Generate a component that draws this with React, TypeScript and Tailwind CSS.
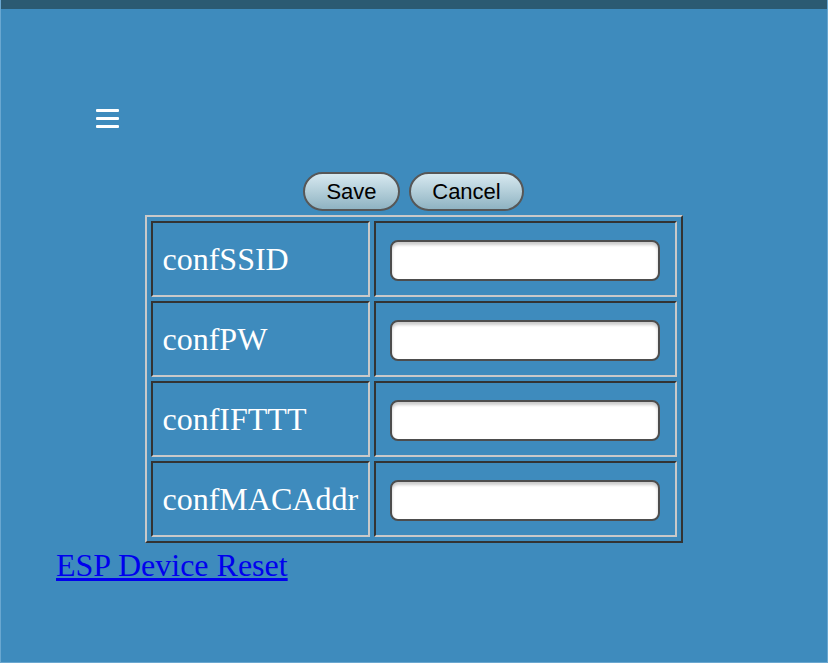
const fields = ["confSSID", "confPW", "confIFTTT", "confMACAddr"];

export default function App() {
  return (
    <div className="w-[828px] h-[663px] bg-[#3e8bbd] border-x border-b border-[#6aa7d0] overflow-hidden font-['Liberation_Serif',serif]">
      {/* top strip */}
      <div className="h-[9px] bg-[#2b5a72]" />

      {/* menu */}
      <div className="pl-[95px] pt-[100px]">
        <div className="flex flex-col gap-[5px] w-[23px]">
          <span className="block h-[3px] bg-white rounded-[1px]" />
          <span className="block h-[3px] bg-white rounded-[1px]" />
          <span className="block h-[3px] bg-white rounded-[1px]" />
        </div>
      </div>

      {/* buttons */}
      <div className="flex justify-center gap-[9px] mt-[44px] pr-[1px]">
        <button className="w-[97px] h-[39px] rounded-full border-2 border-[#575757] bg-gradient-to-b from-[#d7e9f0] to-[#8fb3c2] text-black text-[22px] leading-none font-['Liberation_Sans',sans-serif]">
          Save
        </button>
        <button className="w-[115px] h-[39px] rounded-full border-2 border-[#575757] bg-gradient-to-b from-[#d7e9f0] to-[#8fb3c2] text-black text-[22px] leading-none font-['Liberation_Sans',sans-serif]">
          Cancel
        </button>
      </div>

      {/* config table */}
      <div className="flex justify-center mt-[4px] pr-[1px]">
        <div className="grid grid-cols-[219px_303px] gap-[4px] p-[4px] border-2 border-t-[#c9c9c9] border-l-[#c9c9c9] border-b-[#333] border-r-[#333]">
          {fields.map((f) => (
            <div key={f} className="contents">
              <div className="h-[76px] flex items-center pl-[10px] border-2 border-t-[#333] border-l-[#333] border-b-[#c9c9c9] border-r-[#c9c9c9] text-white text-[32px]">
                {f}
              </div>
              <div className="h-[76px] flex items-center pl-[14px] pt-[2px] border-2 border-t-[#333] border-l-[#333] border-b-[#c9c9c9] border-r-[#c9c9c9]">
                <input
                  type="text"
                  className="w-[270px] h-[41px] bg-white rounded-[8px] border-2 border-[#4d4d4d] shadow-[inset_0_3px_3px_rgba(0,0,0,0.2)] outline-none"
                />
              </div>
            </div>
          ))}
        </div>
      </div>

      <div className="pl-[55px] mt-[4px] leading-[37px]">
        <a href="#" className="text-[#0000ee] underline text-[32px]">
          ESP Device Reset
        </a>
      </div>
    </div>
  );
}
